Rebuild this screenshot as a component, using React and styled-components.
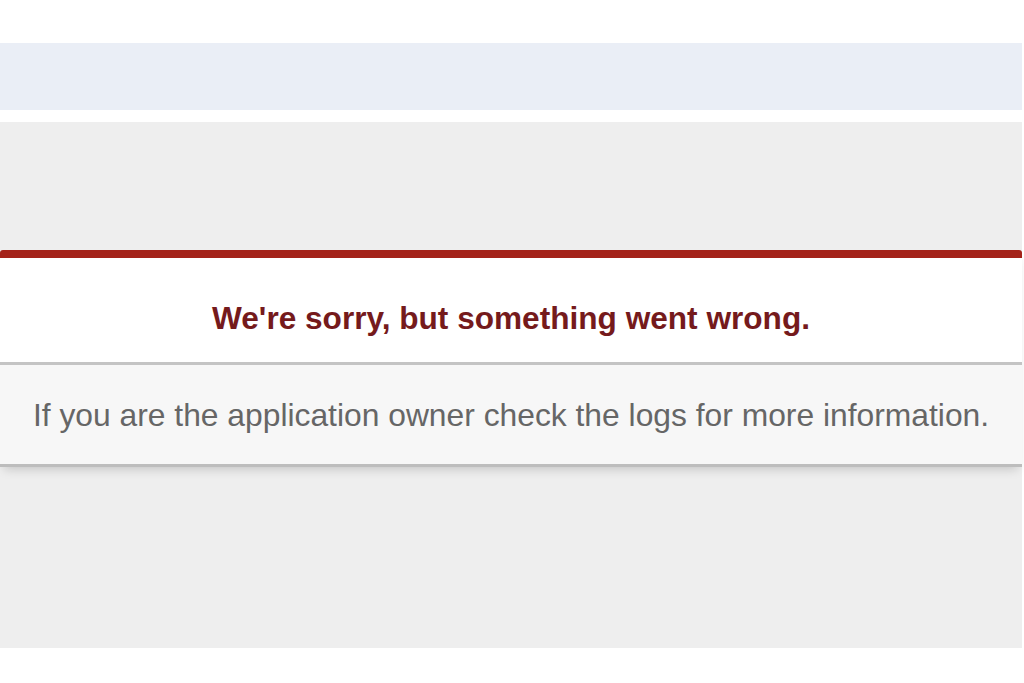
import styled, { createGlobalStyle } from 'styled-components';

const Global = createGlobalStyle`
	html, body {
		margin: 0;
		padding: 0;
		background: #ffffff;
		font-family: "Liberation Sans", Arial, sans-serif;
	}
`;

export default function App() {
	return (
		<Page>
			<Global />
			<Band />
			<Stage>
				<Dialog>
					<Head>
						<Title>We're sorry, but something went wrong.</Title>
					</Head>
					<Info>If you are the application owner check the logs for more information.</Info>
				</Dialog>
			</Stage>
		</Page>
	);
}

const Page = styled.div`
	width: 1024px;
	height: 683px;
	padding-top: 43px;
	box-sizing: border-box;
	overflow: hidden;
`;

const Band = styled.div`
	width: 1022px;
	height: 67px;
	background: #eaeef6;
	margin-bottom: 12px;
`;

const Stage = styled.div`
	width: 1022px;
	height: 526px;
	background: #eeeeee;
	padding-top: 128px;
	box-sizing: border-box;
`;

const Dialog = styled.div`
	width: 1022px;
	border-top: 8px solid #a4231a;
	border-radius: 3px 3px 0 0;
	box-shadow: 0 6px 10px -4px rgba(0, 0, 0, 0.18);
`;

const Head = styled.div`
	background: #ffffff;
	height: 104px;
	display: flex;
	align-items: center;
	justify-content: center;
	border-bottom: 3px solid #c4c4c4;
`;

const Title = styled.h1`
	margin: 0;
	padding-top: 16px;
	font-size: 31.6px;
	font-weight: bold;
	color: #751a1c;
`;

const Info = styled.p`
	margin: 0;
	height: 102px;
	padding-top: 2px;
	box-sizing: border-box;
	display: flex;
	align-items: center;
	justify-content: center;
	background: #f7f7f7;
	border-bottom: 3px solid #bdbdbd;
	font-size: 31.8px;
	color: #666666;
`;
